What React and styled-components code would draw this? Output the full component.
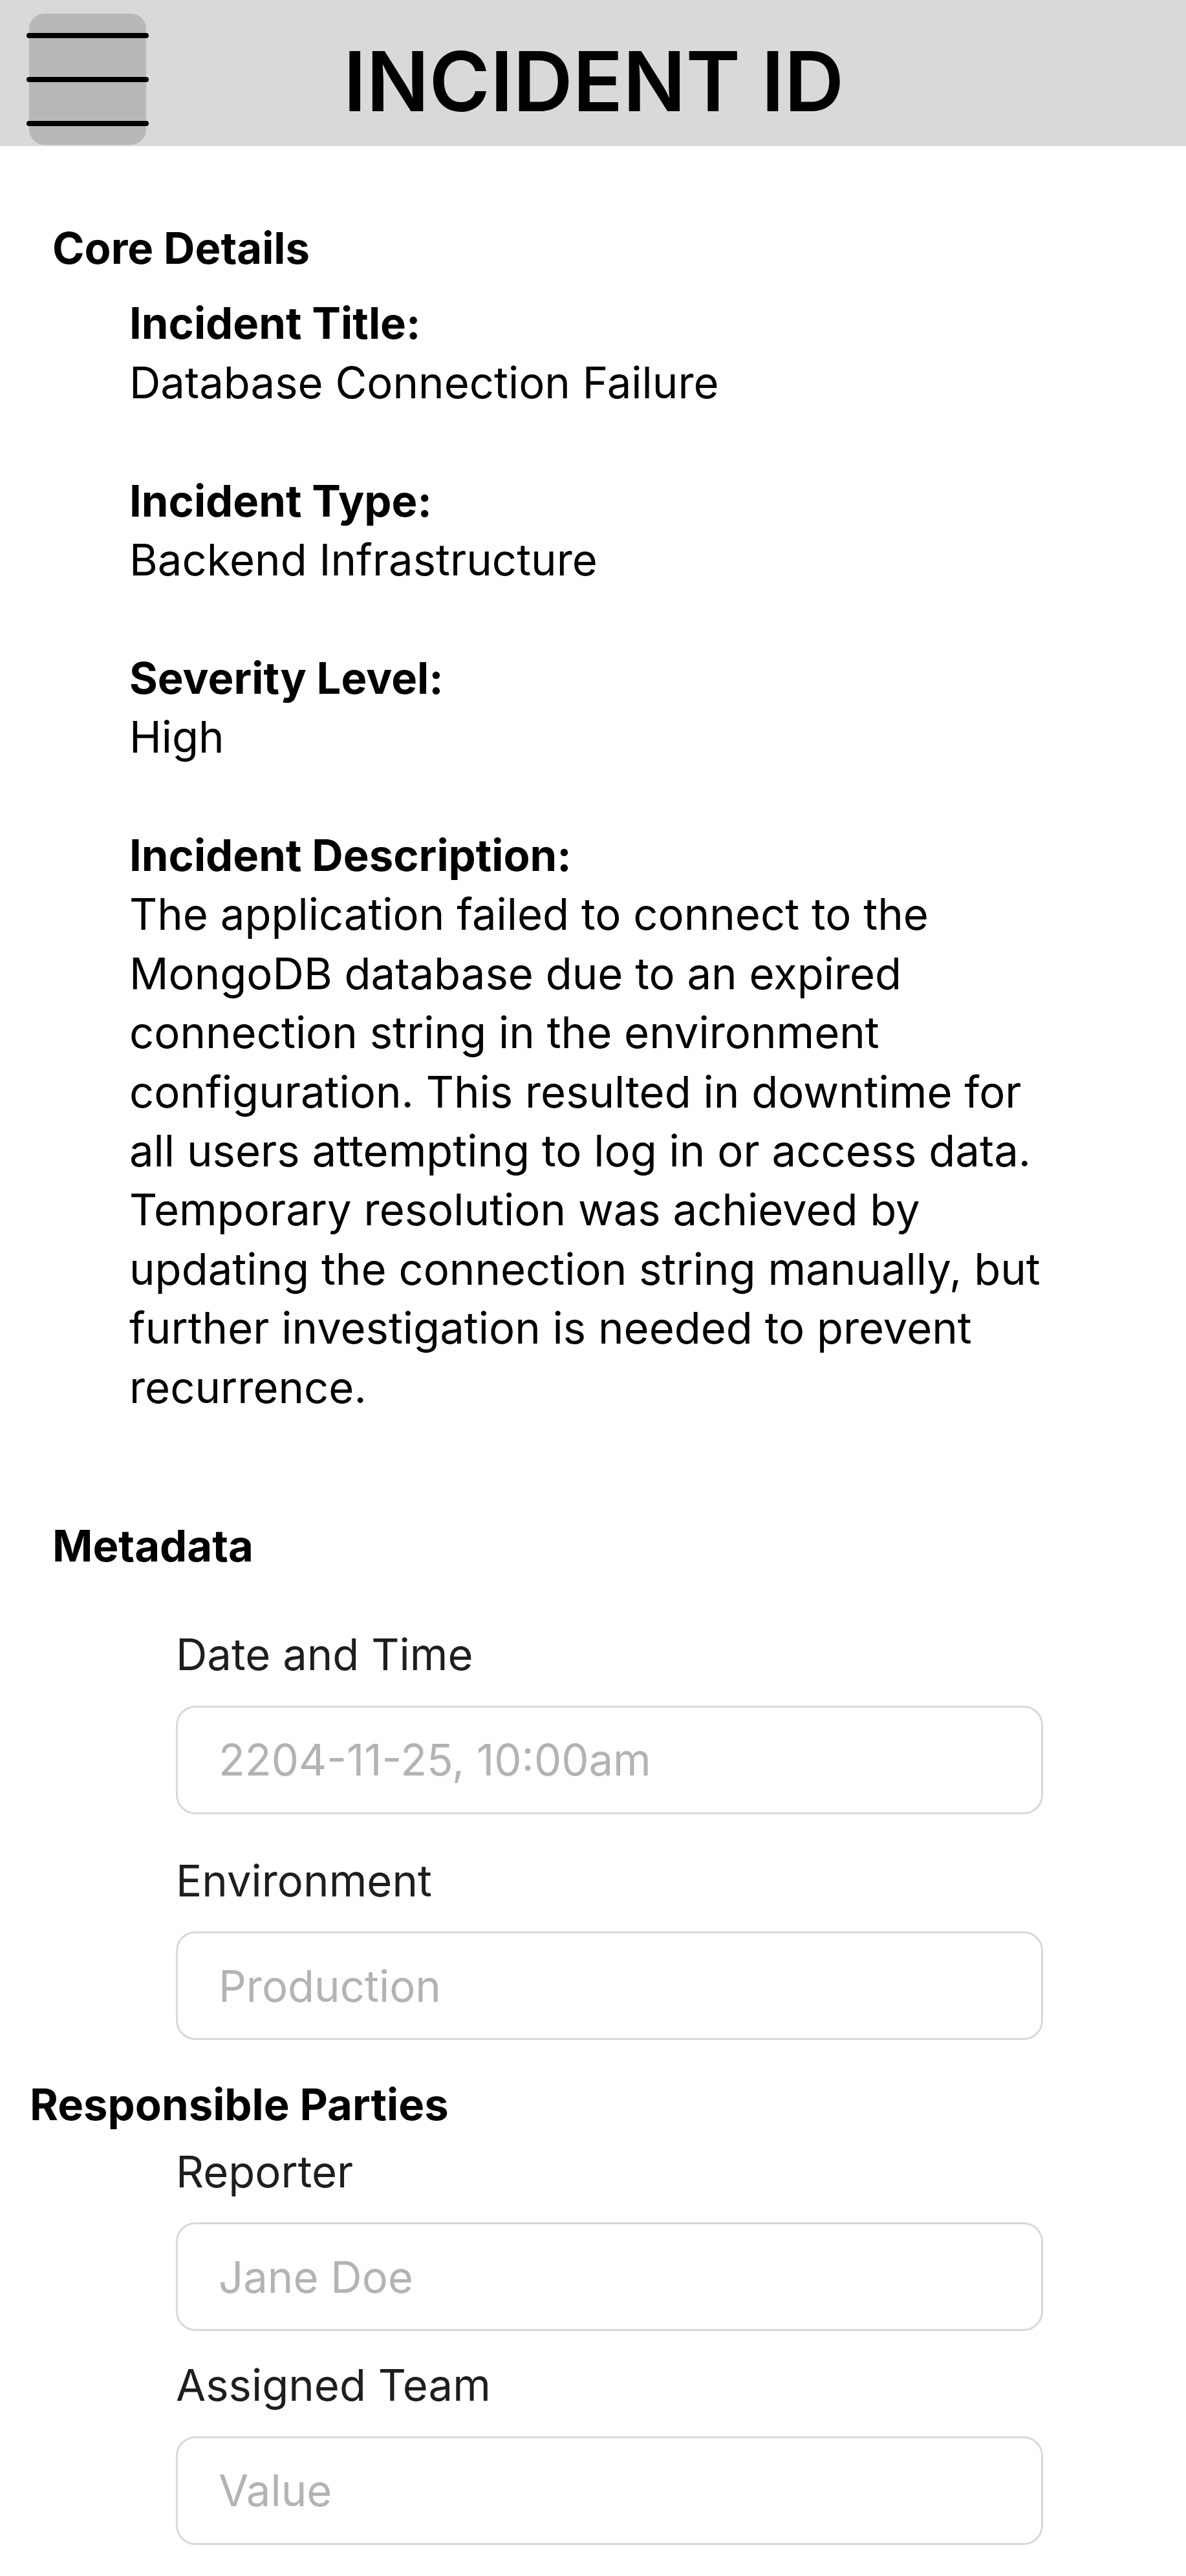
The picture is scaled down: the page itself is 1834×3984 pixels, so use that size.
import React from 'react';
import styled, { createGlobalStyle } from 'styled-components';

const GlobalStyle = createGlobalStyle`
  * {
    box-sizing: border-box;
  }
  body {
    margin: 0;
    background: #fff;
    font-family: Inter, "Noto Sans", sans-serif;
    color: #000;
  }
`;

const coreFields = [
  { label: 'Incident Title:', value: 'Database Connection Failure' },
  { label: 'Incident Type:', value: 'Backend Infrastructure' },
  { label: 'Severity Level:', value: 'High' },
  {
    label: 'Incident Description:',
    value:
      'The application failed to connect to the MongoDB database due to an expired connection string in the environment configuration. This resulted in downtime for all users attempting to log in or access data. Temporary resolution was achieved by updating the connection string manually, but further investigation is needed to prevent recurrence.',
  },
];

const App = () => {
  return (
    <>
      <GlobalStyle />
      <Page>
        <Header>
          <MenuButton aria-label="Menu">
            <MenuLine />
            <MenuLine />
            <MenuLine />
          </MenuButton>
          <Title>INCIDENT ID</Title>
        </Header>

        <Main>
          <SectionTitle $indent={81}>Core Details</SectionTitle>
          <DetailList>
            {coreFields.map((f) => (
              <Detail key={f.label}>
                <DetailLabel>{f.label}</DetailLabel>
                <DetailValue>{f.value}</DetailValue>
              </Detail>
            ))}
          </DetailList>

          <SectionTitle $indent={81} $top={154}>
            Metadata
          </SectionTitle>
          <FormGroup $top={77}>
            <FormField>
              <FieldLabel>Date and Time</FieldLabel>
              <TextInput placeholder="2204-11-25, 10:00am" />
            </FormField>
            <FormField $top={57}>
              <FieldLabel>Environment</FieldLabel>
              <TextInput placeholder="Production" />
            </FormField>
          </FormGroup>

          <SectionTitle $indent={46} $top={54}>
            Responsible Parties
          </SectionTitle>
          <FormGroup $top={12}>
            <FormField>
              <FieldLabel>Reporter</FieldLabel>
              <TextInput placeholder="Jane Doe" />
            </FormField>
            <FormField $top={38}>
              <FieldLabel>Assigned Team</FieldLabel>
              <TextInput placeholder="Value" />
            </FormField>
          </FormGroup>
        </Main>
      </Page>
    </>
  );
};

const Page = styled.div`
  width: 1834px;
  min-height: 3984px;
  background: #fff;
`;

const Header = styled.header`
  display: grid;
  grid-template-columns: 1fr auto 1fr;
  align-items: start;
  height: 226px;
  padding: 21px 0 0 45px;
  background: #d9d9d9;
`;

const MenuButton = styled.button`
  display: flex;
  flex-direction: column;
  justify-content: space-between;
  width: 181px;
  height: 203px;
  padding: 30px 0 29px;
  border: none;
  border-radius: 24px;
  background: #b8b8b8;
  cursor: pointer;
`;

const MenuLine = styled.span`
  display: block;
  height: 8px;
  margin: 0 -4px;
  border-radius: 4px;
  background: #000;
`;

const Title = styled.h1`
  margin: 28px 0 0 -43px;
  font-size: 128px;
  font-weight: 600;
  line-height: 1.21;
  color: #000;
`;

const Main = styled.main`
  padding: 112px 0 46px;
  font-size: 67px;
  line-height: 91.4px;
`;

const SectionTitle = styled.h2`
  margin: ${(p) => p.$top || 0}px 0 0 ${(p) => p.$indent}px;
  font-size: 67px;
  font-weight: 700;
  line-height: 91.4px;
`;

const DetailList = styled.div`
  display: flex;
  flex-direction: column;
  gap: 91.4px;
  width: 1640px;
  margin-top: 25px;
  padding-left: 200px;
`;

const Detail = styled.div`
  display: flex;
  flex-direction: column;
`;

const DetailLabel = styled.div`
  font-weight: 700;
`;

const DetailValue = styled.div`
  font-weight: 400;
`;

const FormGroup = styled.div`
  display: flex;
  flex-direction: column;
  width: 1613px;
  margin-top: ${(p) => p.$top || 0}px;
  padding-left: 272px;
`;

const FormField = styled.label`
  display: flex;
  flex-direction: column;
  gap: 33px;
  margin-top: ${(p) => p.$top || 0}px;
`;

const FieldLabel = styled.span`
  font-weight: 400;
  color: #1e1e1e;
`;

const TextInput = styled.input`
  width: 100%;
  height: 168px;
  padding: 0 0 0 63px;
  border: 3px solid #d9d9d9;
  border-radius: 30px;
  background: #fff;
  font-family: Inter, "Noto Sans", sans-serif;
  font-size: 67px;
  color: #1e1e1e;
  outline: none;

  &::placeholder {
    color: #b3b3b3;
  }
`;

export default App;
